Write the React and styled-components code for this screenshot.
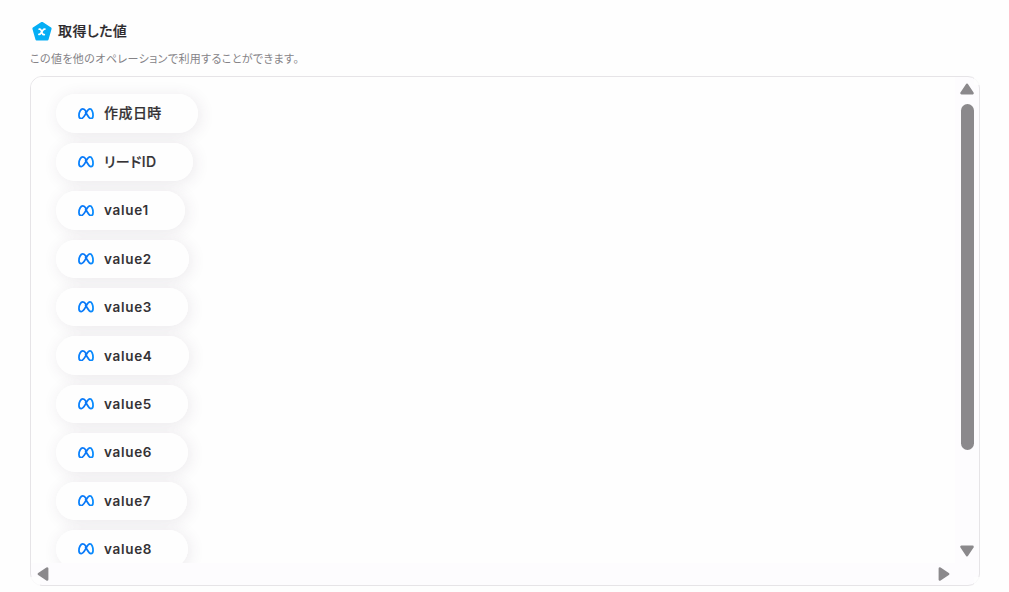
import React from "react";
import styled, { createGlobalStyle } from "styled-components";

const values = [
    { label: "作成日時", width: 142, japanese: true },
    { label: "リードID", width: 137, japanese: true, drop: 1 },
    { label: "value1", width: 129 },
    { label: "value2", width: 132.5 },
    { label: "value3", width: 132 },
    { label: "value4", width: 133 },
    { label: "value5", width: 132 },
    { label: "value6", width: 132 },
    { label: "value7", width: 131 },
    { label: "value8", width: 132 },
];

const MetaIcon = () => (
    <svg width="16" height="11.5" viewBox="0 0 17 12" preserveAspectRatio="none" fill="none">
        <defs>
            <linearGradient id="metaBlue" x1="0" y1="0" x2="17" y2="0" gradientUnits="userSpaceOnUse">
                <stop offset="0" stopColor="#0a84ff" />
                <stop offset="0.45" stopColor="#0874f6" />
                <stop offset="1" stopColor="#0a90ff" />
            </linearGradient>
        </defs>
        <path
            d="M8.5 3.6C7.4 1.8 6.4 1 5.1 1C2.8 1 1 4.3 1 7.7C1 9.8 2 11 3.5 11C5 11 5.9 10 7.7 6.9L9 4.6C10.3 2.2 11.3 1 12.7 1C14.6 1 16 4.2 16 7.7C16 9.8 15.2 11 13.7 11C12.2 11 11.4 10 9.7 7.1L7.8 3.9"
            stroke="url(#metaBlue)"
            strokeWidth="1.9"
            strokeLinejoin="round"
        />
    </svg>
);

const Arrow = ({ turn = 0 }) => (
    <svg width="16" height="16" viewBox="0 0 16 16">
        <path
            d="M8 3.9L13.5 12.1H2.5Z"
            fill="#8b898c"
            stroke="#8b898c"
            strokeWidth="2.6"
            strokeLinejoin="round"
            transform={`rotate(${turn} 8 8)`}
        />
    </svg>
);

const App = () => {
    return (
        <>
            <GlobalStyle />
            <Page>
                <Header>
                    <svg width="20" height="20" viewBox="0 0 20 20">
                        <path
                            d="M10 2.1L18.4 7.6L15.4 18.2H4.6L1.6 7.6Z"
                            fill="#05aef5"
                            stroke="#05aef5"
                            strokeWidth="2.4"
                            strokeLinejoin="round"
                        />
                        <path
                            d="M7.2 8.2H7.8Q8.7 8.2 9.1 9.2L10.4 12.6Q10.8 13.7 12.3 13.6M12.9 8.2Q11.8 8 10.9 9.2L8.8 12.3Q7.9 13.6 6.9 13.4"
                            fill="none"
                            stroke="#fff"
                            strokeWidth="1.7"
                            strokeLinecap="round"
                        />
                    </svg>
                    <Title>取得した値</Title>
                </Header>
                <Description>この値を他のオペレーションで利用することができます。</Description>
                <Frame>
                    <Panel>
                        <List>
                            {values.map((value) => (
                                <Pill key={value.label} $width={value.width} $japanese={value.japanese} $drop={value.drop}>
                                    <MetaIcon />
                                    <span>{value.label}</span>
                                </Pill>
                            ))}
                        </List>
                        <VerticalBar>
                            <Arrow />
                            <Thumb />
                            <Arrow turn={180} />
                        </VerticalBar>
                        <HorizontalBar>
                            <Arrow turn={-90} />
                            <Arrow turn={90} />
                        </HorizontalBar>
                    </Panel>
                    <CornerFade $side="right" $edge="top" />
                    <CornerFade $side="right" $edge="bottom" />
                    <CornerFade $side="left" $edge="bottom" />
                </Frame>
            </Page>
        </>
    );
};

export default App;

const GlobalStyle = createGlobalStyle`
    * {
        box-sizing: border-box;
    }

    body {
        margin: 0;
        background: #fefefe;
        font-family: Inter, "Noto Sans CJK JP", sans-serif;
        overflow: hidden;
    }

    svg {
        display: block;
        flex-shrink: 0;
    }
`;

const Page = styled.main`
    width: 1009px;
    height: 592px;
    padding: 21px 29px 6px 30px;
    display: flex;
    flex-direction: column;
`;

const Header = styled.header`
    height: 20px;
    padding-left: 2px;
    display: flex;
    align-items: center;
    gap: 6px;
`;

const Title = styled.h1`
    margin: 0;
    font-size: 14px;
    line-height: 20px;
    font-weight: 500;
    font-feature-settings: "palt";
    letter-spacing: 0.4px;
    color: #2b292c;
    -webkit-text-stroke: 0.2px #2b292c;
`;

const Description = styled.p`
    margin: 9px 0 8px;
    height: 18px;
    font-size: 11px;
    line-height: 18px;
    font-feature-settings: "palt";
    letter-spacing: 0.4px;
    color: #858387;
    white-space: nowrap;
`;

const Frame = styled.div`
    position: relative;
`;

const CornerFade = styled.i`
    position: absolute;
    ${({ $side }) => $side}: 0;
    ${({ $edge }) => $edge}: 0;
    width: ${({ $side }) => ($side === "left" ? "10px" : "6px")};
    height: 9px;
    background: #fefefe;
    opacity: 0.8;
`;

const Panel = styled.section`
    height: 510px;
    display: grid;
    grid-template-columns: minmax(0, 1fr) 24px;
    grid-template-rows: minmax(0, 1fr) 22px;
    border: 1px solid #e6e4e7;
    border-radius: 12px;
    background: #fdfcfe;
    overflow: hidden;
`;

const List = styled.div`
    padding: 17.4px 25px 0;
    display: flex;
    flex-direction: column;
    align-items: flex-start;
    gap: 10px;
    background: #fefefe;
    overflow: hidden;
    isolation: isolate;
`;

const Pill = styled.div`
    position: relative;
    width: ${({ $width }) => $width}px;
    height: 38.4px;
    flex-shrink: 0;
    padding-left: 22px;
    display: flex;
    align-items: center;
    gap: 10px;
    border-radius: 20px;
    color: #343235;
    font-size: ${({ $japanese }) => ($japanese ? "14px" : "13.5px")};
    font-weight: ${({ $japanese }) => ($japanese ? 500 : 600)};
    font-feature-settings: "palt";
    letter-spacing: ${({ $japanese }) => ($japanese ? "0.45px" : "0.7px")};
    white-space: nowrap;
    background: #fefefe;

    /* the shadow stays beneath neighbouring pills */
    &::before {
        content: "";
        position: absolute;
        inset: 0;
        z-index: -1;
        border-radius: 20px;
        box-shadow: 2px 2px 16px rgba(65, 45, 75, 0.1);
    }

    span {
        line-height: 20px;
        margin-top: ${({ $japanese, $drop = 0 }) => ($japanese ? -1 + $drop * 2 : 0)}px;
        -webkit-text-stroke: ${({ $japanese }) => ($japanese ? "0.2px #343235" : "0")};
    }
`;

const VerticalBar = styled.div`
    padding: 4px 4px 4px 0;
    display: flex;
    flex-direction: column;
    align-items: flex-end;
`;

const Thumb = styled.div`
    width: 13px;
    height: 346px;
    margin: 7px 1px auto 0;
    border-radius: 7px;
    background: #8b898c;
`;

const HorizontalBar = styled.div`
    padding: 0 3px 0 4px;
    display: flex;
    align-items: center;
    justify-content: space-between;
`;
